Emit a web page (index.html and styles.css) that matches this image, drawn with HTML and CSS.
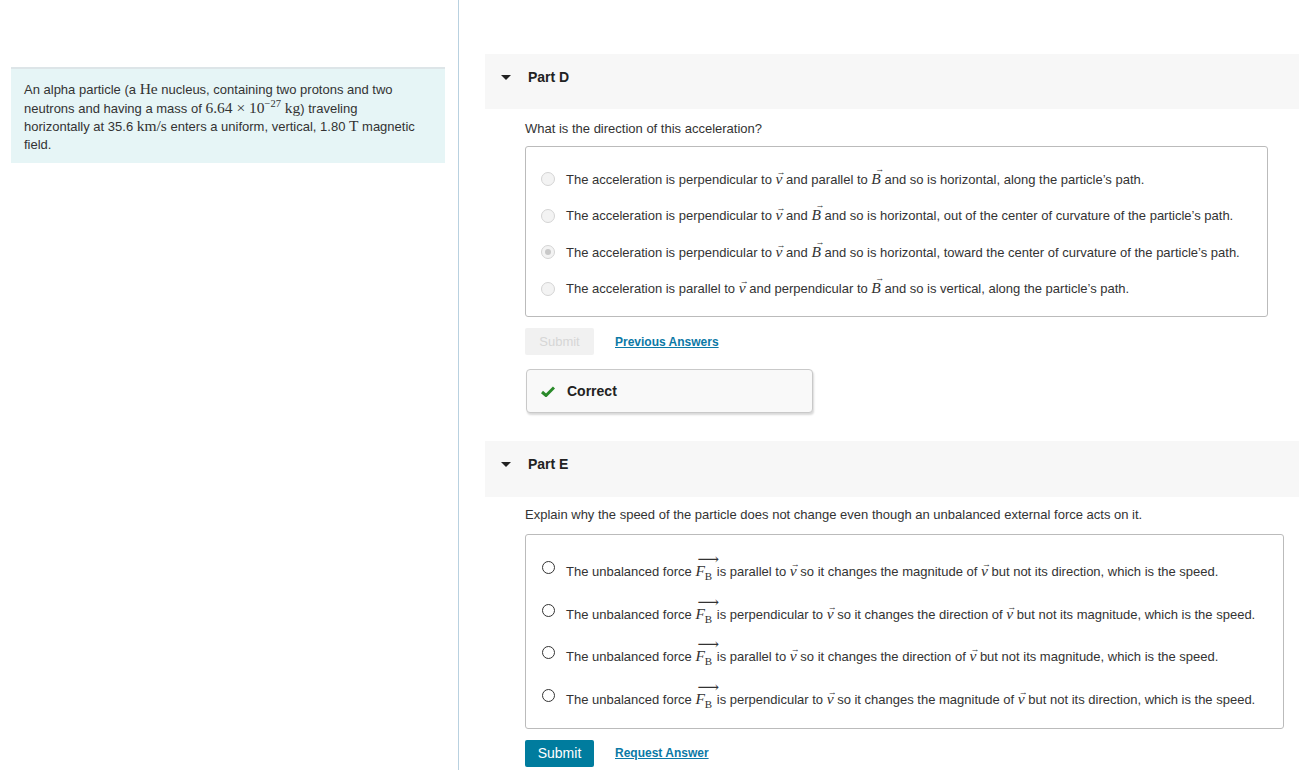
FILE: index.html
```html
<!DOCTYPE html>
<html lang="en">
<head>
    <meta charset="UTF-8">
    <title>Part D / Part E</title>
    <link rel="stylesheet" href="styles.css">
</head>
<body>
    <div class="page">
        <div class="intro-col">
            <div class="intro">
                An alpha particle (a <span class="m">He</span> nucleus, containing two protons and two
                neutrons and having a mass of <span class="m">6.64 × 10<sup>−27</sup> kg</span>) traveling
                horizontally at 35.6 <span class="m">km/s</span> enters a uniform, vertical, 1.80 <span class="m">T</span> magnetic
                field.
            </div>
        </div>
        <div class="parts-col">
            <!-- Part D -->
            <div class="part-head">
                <span class="caret"></span>
                <span class="part-title">Part D</span>
            </div>
            <div class="part-body">
                <p class="question">What is the direction of this acceleration?</p>
                <div class="choices choices-d">
                    <div class="choice">
                        <span class="radio disabled"></span>
                        <span>The acceleration is perpendicular to <i class="vec">v</i> and parallel to <i class="vec big">B</i> and so is horizontal, along the particle’s path.</span>
                    </div>
                    <div class="choice">
                        <span class="radio disabled"></span>
                        <span>The acceleration is perpendicular to <i class="vec">v</i> and <i class="vec big">B</i> and so is horizontal, out of the center of curvature of the particle’s path.</span>
                    </div>
                    <div class="choice">
                        <span class="radio disabled checked"></span>
                        <span>The acceleration is perpendicular to <i class="vec">v</i> and <i class="vec big">B</i> and so is horizontal, toward the center of curvature of the particle’s path.</span>
                    </div>
                    <div class="choice">
                        <span class="radio disabled"></span>
                        <span>The acceleration is parallel to <i class="vec">v</i> and perpendicular to <i class="vec big">B</i> and so is vertical, along the particle’s path.</span>
                    </div>
                </div>
                <div class="actions">
                    <button class="btn btn-off">Submit</button>
                    <a class="link" href="#">Previous Answers</a>
                </div>
                <div class="feedback">
                    <svg class="check" width="14" height="11" viewBox="0 0 14 11"><path d="M1 6 L5 9.5 L13 1.5" fill="none" stroke="#2a8a2a" stroke-width="3"/></svg>
                    <span>Correct</span>
                </div>
            </div>

            <!-- Part E -->
            <div class="part-head part-e">
                <span class="caret"></span>
                <span class="part-title">Part E</span>
            </div>
            <div class="part-body">
                <p class="question q-e">Explain why the speed of the particle does not change even though an unbalanced external force acts on it.</p>
                <div class="choices choices-e">
                    <div class="choice">
                        <span class="radio"></span>
                        <span>The unbalanced force <i class="force">F<sub>B</sub></i> is parallel to <i class="vec">v</i> so it changes the magnitude of <i class="vec">v</i> but not its direction, which is the speed.</span>
                    </div>
                    <div class="choice">
                        <span class="radio"></span>
                        <span>The unbalanced force <i class="force">F<sub>B</sub></i> is perpendicular to <i class="vec">v</i> so it changes the direction of <i class="vec">v</i> but not its magnitude, which is the speed.</span>
                    </div>
                    <div class="choice">
                        <span class="radio"></span>
                        <span>The unbalanced force <i class="force">F<sub>B</sub></i> is parallel to <i class="vec">v</i> so it changes the direction of <i class="vec">v</i> but not its magnitude, which is the speed.</span>
                    </div>
                    <div class="choice">
                        <span class="radio"></span>
                        <span>The unbalanced force <i class="force">F<sub>B</sub></i> is perpendicular to <i class="vec">v</i> so it changes the magnitude of <i class="vec">v</i> but not its direction, which is the speed.</span>
                    </div>
                </div>
                <div class="actions">
                    <button class="btn btn-on">Submit</button>
                    <a class="link" href="#">Request Answer</a>
                </div>
            </div>
        </div>
    </div>
</body>
</html>
```

FILE: styles.css
```css
body {
    margin: 0;
    font-family: "Liberation Sans", Arial, sans-serif;
    font-size: 13px;
    color: #333;
    background: #fff;
}
.page {
    display: flex;
    min-height: 770px;
}
.intro-col {
    width: 459px;
    border-right: 1px solid #b9d1e0;
    padding-top: 67px;
    box-sizing: border-box;
    flex-shrink: 0;
}
.intro {
    margin-left: 11px;
    width: 434px;
    box-sizing: border-box;
    background: #e6f5f6;
    border-top: 2px solid #dde5e8;
    padding: 11px 23px 9px 13px;
    line-height: 17.7px;
}
.m {
    font-family: "Liberation Serif", "DejaVu Serif", serif;
    font-size: 15.5px;
}
.m sup {
    font-size: 10.5px;
    line-height: 0;
    vertical-align: 6px;
}
.parts-col {
    flex: 1;
    padding-top: 54px;
    padding-left: 26px;
}
.part-head {
    height: 55px;
    box-sizing: border-box;
    padding-bottom: 9px;
    background: #f7f7f7;
    display: flex;
    align-items: center;
}
.part-e {
    margin-top: 28px;
    height: 56px;
    padding-bottom: 10px;
}
.caret {
    width: 0;
    height: 0;
    border-left: 5px solid transparent;
    border-right: 5px solid transparent;
    border-top: 5px solid #222;
    margin-left: 16px;
    margin-right: 17px;
}
.part-title {
    font-size: 14px;
    font-weight: bold;
    color: #222;
}
.part-body {
    padding-left: 40px;
}
.question {
    margin: 11px 0 8px 0;
    line-height: 18px;
}
.q-e {
    margin-top: 9px;
    margin-bottom: 10px;
}
.choices {
    display: inline-block;
    border: 1px solid #bbb;
    border-radius: 3px;
    padding: 14px 27px 9px 15px;
}
.choice {
    display: flex;
    align-items: center;
    white-space: nowrap;
}
.choices-d .choice {
    height: 36.5px;
}
.choices-e {
    padding: 15px 28px 7px 16px;
}
.choices-e .choice {
    height: 42.7px;
}
.choices-e .radio {
    margin-top: -8px;
}
.radio {
    width: 11px;
    height: 11px;
    border: 1.5px solid #333;
    border-radius: 50%;
    margin-right: 11px;
    position: relative;
    flex-shrink: 0;
}
.radio.disabled {
    width: 12px;
    height: 12px;
    border: 1px solid #d4d4d4;
    background: #f3f3f3;
}
.radio.checked::after {
    content: "";
    position: absolute;
    left: 3px;
    top: 3px;
    width: 6px;
    height: 6px;
    border-radius: 50%;
    background: #c8c8c8;
}
.vec, .force {
    font-family: "Liberation Serif", "DejaVu Serif", serif;
    font-size: 15.5px;
    position: relative;
    display: inline-block;
    line-height: 12px;
}
.vec::after {
    content: "\2192";
    position: absolute;
    left: 1px;
    top: -7px;
    font-size: 9px;
    font-style: normal;
}
.vec.big::after {
    left: 4px;
    top: -10px;
}
.force {
    padding-right: 1px;
}
.force sub {
    font-style: normal;
    font-size: 11px;
    line-height: 0;
}
.force::after {
    content: "\27F6";
    position: absolute;
    left: 2px;
    top: -12px;
    font-size: 15px;
    font-style: normal;
}
.actions {
    display: flex;
    align-items: center;
    margin-top: 11px;
}
.btn {
    width: 69px;
    height: 27px;
    border: none;
    border-radius: 2px;
    font-family: "Liberation Sans", Arial, sans-serif;
    font-size: 14px;
    margin-right: 21px;
    padding: 0;
}
.btn-off {
    background: #f1f1f1;
    color: #d6d6d6;
    font-size: 13px;
}
.btn-on {
    background: #007c9e;
    color: #fff;
}
.link {
    color: #0b79a6;
    font-weight: bold;
    font-size: 12px;
    text-decoration: underline;
}
.feedback {
    margin-top: 14px;
    margin-left: 1px;
    width: 287px;
    height: 44px;
    box-sizing: border-box;
    background: #f9f9f9;
    border: 1px solid #c9c9c9;
    border-radius: 4px;
    box-shadow: 1px 2px 2px rgba(0, 0, 0, 0.15);
    display: flex;
    align-items: center;
    padding-left: 14px;
    font-size: 14px;
    font-weight: bold;
    color: #222;
}
.check {
    margin-right: 12px;
}
```
